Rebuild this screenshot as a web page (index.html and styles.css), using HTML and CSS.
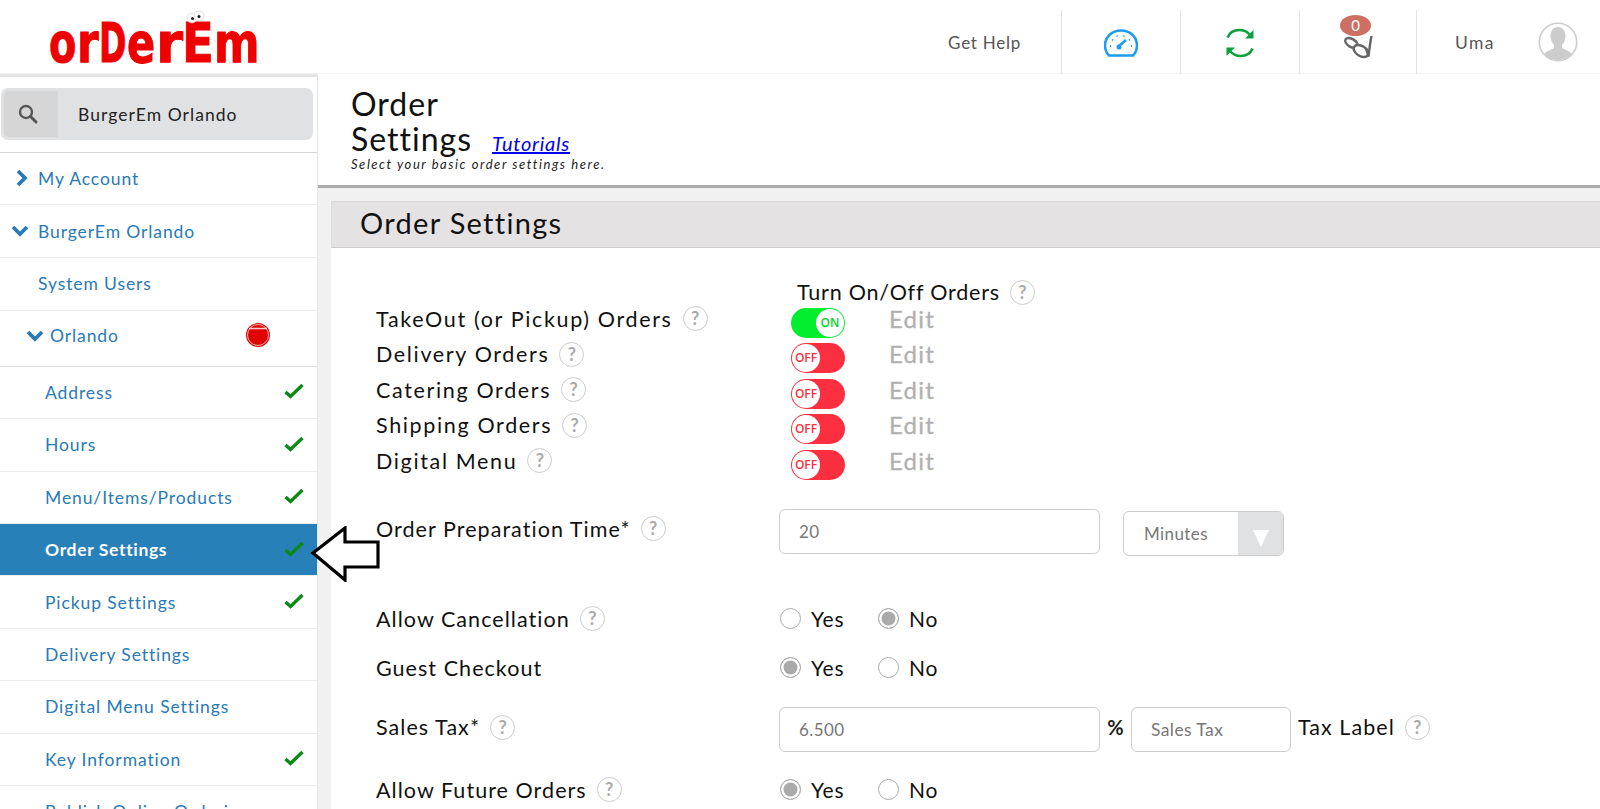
FILE: index.html
```html
<!DOCTYPE html>
<html lang="en">
<head>
<meta charset="utf-8">
<title>Order Settings</title>
<link rel="stylesheet" href="styles.css">
</head>
<body>
<header class="topbar">
  <div class="logo">
    <div class="logo-text"><span class="lg lg-o">o</span><span class="lg lg-r">r</span><span class="lg lg-d">D</span><span class="lg lg-e">e</span><span class="lg lg-r2">r</span><span class="lg lg-ce">E</span><span class="lg lg-m">m</span></div>
    <svg class="logo-eyes" viewBox="0 0 18 14" width="18" height="14"><circle cx="5" cy="8" r="5" fill="#fff" stroke="#ccc" stroke-width=".6"/><circle cx="12" cy="6" r="5" fill="#fff" stroke="#ccc" stroke-width=".6"/><circle cx="5.500" cy="8.500" r="1.500" fill="#222"/><circle cx="12" cy="6.500" r="1.500" fill="#222"/></svg>
  </div>
  <div class="top-cell help">Get Help</div>
  <div class="top-cell icon-cell">
    <svg width="34" height="28" viewBox="0 0 34 28" fill="none"><path d="M5 26.500h24c3-3 4-6.500 4-10C33 8 26 1.500 17 1.500S1 8 1 16.500c0 3.500 1 7 4 10z" stroke="#1e9cf0" stroke-width="2.600" stroke-linejoin="round"/><path d="M15 17l7-6" stroke="#1e9cf0" stroke-width="2.600"/><circle cx="15" cy="18" r="2.500" fill="#1e9cf0"/><path d="M6 17h1M8 10.500l1 .6M13 6.500l.4 1M20 6.500l-.4 1M28 17h-1M26 10.500l-1 .6" stroke="#1e9cf0" stroke-width="2"/></svg>
  </div>
  <div class="top-cell icon-cell">
    <svg width="30" height="32" viewBox="0 0 30 32" fill="none"><path d="M2.500 10.500C4.500 5.500 9 3 14.500 3c4 0 7.500 1.500 10 4.500" stroke="#0da03c" stroke-width="2.600"/><path d="M28.500 3v8.500H20z" fill="#0da03c"/><path d="M27.500 21.500c-2 5-6.500 7.500-12 7.500-4 0-7.500-1.500-10-4.500" stroke="#0da03c" stroke-width="2.600"/><path d="M1.500 29v-8.500H10z" fill="#0da03c"/></svg>
  </div>
  <div class="top-cell icon-cell pills">
    <span class="badge">0</span>
    <svg class="pill-icon" width="30" height="25" viewBox="0 0 30 25" fill="none"><ellipse cx="8.500" cy="8" rx="7" ry="4" transform="rotate(32 8.500 8)" stroke="#666" stroke-width="2.400" fill="#fff"/><ellipse cx="18" cy="16" rx="8" ry="5" transform="rotate(32 18 16)" stroke="#666" stroke-width="2.400" fill="#fff"/><path d="M23 13l2.500 8.500C26.500 14 27 8 28.500 1" stroke="#666" stroke-width="2.400"/></svg>
  </div>
  <div class="top-user">
    <span class="user-name">Uma</span>
    <svg class="avatar" width="40" height="40" viewBox="0 0 40 40"><circle cx="20" cy="20" r="18.700" fill="#fff" stroke="#ccc" stroke-width="1.600"/><path d="M20 5c5 0 7.500 4 7.500 9 0 3.500-1.500 7-3.500 9v3c3 2 8 3 10 6-3.500 3.800-8.500 6-14 6s-10.500-2.200-14-6c2-3 7-4 10-6v-3c-2-2-3.500-5.500-3.500-9 0-5 2.500-9 7.500-9z" fill="#ccc"/></svg>
  </div>
</header>

<div class="layout">
  <aside class="sidebar">
    <div class="search-wrap">
      <div class="search">
        <span class="search-icon"><svg width="22" height="22" viewBox="0 0 22 22" fill="none"><circle cx="9" cy="9" r="6" stroke="#555" stroke-width="2.400"/><path d="M13.500 13.500L19 19" stroke="#555" stroke-width="3" stroke-linecap="round"/></svg></span>
        <span class="search-text">BurgerEm Orlando</span>
      </div>
    </div>
    <nav class="nav">
      <a class="nav-row lvl0"><svg class="chev" width="14" height="18" viewBox="0 0 14 18"><path d="M3 2l7 7-7 7" fill="none" stroke="#2a7ab5" stroke-width="3.800"/></svg>My Account</a>
      <a class="nav-row lvl0"><svg class="chev down" width="18" height="14" viewBox="0 0 18 14"><path d="M2 3l7 7 7-7" fill="none" stroke="#2a7ab5" stroke-width="3.800"/></svg>BurgerEm Orlando</a>
      <a class="nav-row lvl1">System Users</a>
      <a class="nav-row lvl2"><svg class="chev down" width="18" height="14" viewBox="0 0 18 14"><path d="M2 3l7 7 7-7" fill="none" stroke="#2a7ab5" stroke-width="3.800"/></svg>Orlando
        <svg class="status" width="26" height="26" viewBox="0 0 26 26"><circle cx="13" cy="13" r="12" fill="#e00000"/><circle cx="13" cy="13" r="10.500" fill="none" stroke="#f6b9b9" stroke-width="1"/><path d="M4 6.500h18" stroke="#fff" stroke-width="1.500" opacity=".8"/></svg>
      </a>
      <a class="nav-row sub">Address<svg class="check" width="20" height="16" viewBox="0 0 20 16"><path d="M1.500 9l5 4.500L18.500 2" fill="none" stroke="#0d8a16" stroke-width="3.400"/></svg></a>
      <a class="nav-row sub">Hours<svg class="check" width="20" height="16" viewBox="0 0 20 16"><path d="M1.500 9l5 4.500L18.500 2" fill="none" stroke="#0d8a16" stroke-width="3.400"/></svg></a>
      <a class="nav-row sub">Menu/Items/Products<svg class="check" width="20" height="16" viewBox="0 0 20 16"><path d="M1.500 9l5 4.500L18.500 2" fill="none" stroke="#0d8a16" stroke-width="3.400"/></svg></a>
      <a class="nav-row sub active">Order Settings<svg class="check" width="20" height="16" viewBox="0 0 20 16"><path d="M1.500 9l5 4.500L18.500 2" fill="none" stroke="#0d8a16" stroke-width="3.400"/></svg></a>
      <a class="nav-row sub">Pickup Settings<svg class="check" width="20" height="16" viewBox="0 0 20 16"><path d="M1.500 9l5 4.500L18.500 2" fill="none" stroke="#0d8a16" stroke-width="3.400"/></svg></a>
      <a class="nav-row sub">Delivery Settings</a>
      <a class="nav-row sub">Digital Menu Settings</a>
      <a class="nav-row sub">Key Information<svg class="check" width="20" height="16" viewBox="0 0 20 16"><path d="M1.500 9l5 4.500L18.500 2" fill="none" stroke="#0d8a16" stroke-width="3.400"/></svg></a>
      <a class="nav-row sub">Publish Online Ordering</a>
    </nav>
  </aside>

  <main class="main">
    <div class="page-head">
      <h1 class="page-title">Order<br>Settings<a class="tutorials">Tutorials</a></h1>
      <p class="page-sub">Select your basic order settings here.</p>
    </div>
    <section class="panel">
      <h2 class="panel-title">Order Settings</h2>
      <div class="panel-body">
        <div class="row turn-row"><span></span><span class="label turn-label">Turn On/Off Orders<i class="q">?</i></span></div>
        <div class="row tog-row"><span class="label">TakeOut (or Pickup) Orders<i class="q">?</i></span><span class="tog-cell"><span class="toggle on"><b>ON</b></span><span class="edit">Edit</span></span></div>
        <div class="row tog-row"><span class="label">Delivery Orders<i class="q">?</i></span><span class="tog-cell"><span class="toggle off"><b>OFF</b></span><span class="edit">Edit</span></span></div>
        <div class="row tog-row"><span class="label">Catering Orders<i class="q">?</i></span><span class="tog-cell"><span class="toggle off"><b>OFF</b></span><span class="edit">Edit</span></span></div>
        <div class="row tog-row"><span class="label">Shipping Orders<i class="q">?</i></span><span class="tog-cell"><span class="toggle off"><b>OFF</b></span><span class="edit">Edit</span></span></div>
        <div class="row tog-row"><span class="label">Digital Menu<i class="q">?</i></span><span class="tog-cell"><span class="toggle off"><b>OFF</b></span><span class="edit">Edit</span></span></div>

        <div class="row prep-row"><span class="label">Order Preparation Time*<i class="q">?</i></span>
          <span class="ctl"><input class="field wide" value="20"><span class="select"><span class="select-val">Minutes</span><span class="select-arrow"></span></span></span></div>

        <div class="row radio-row cancel"><span class="label">Allow Cancellation<i class="q">?</i></span><span class="radios"><i class="radio"></i><span class="opt">Yes</span><i class="radio sel"></i><span class="opt">No</span></span></div>
        <div class="row radio-row guest"><span class="label">Guest Checkout</span><span class="radios"><i class="radio sel"></i><span class="opt">Yes</span><i class="radio"></i><span class="opt">No</span></span></div>

        <div class="row tax-row"><span class="label">Sales Tax*<i class="q">?</i></span>
          <span class="ctl"><input class="field wide" value="6.500"><span class="pct">%</span><input class="field short" value="Sales Tax"><span class="label tax-label">Tax Label<i class="q">?</i></span></span></div>

        <div class="row radio-row future"><span class="label">Allow Future Orders<i class="q">?</i></span><span class="radios"><i class="radio sel"></i><span class="opt">Yes</span><i class="radio"></i><span class="opt">No</span></span></div>
      </div>
    </section>
  </main>
</div>

<svg class="pointer" width="72" height="56" viewBox="0 0 72 56"><path d="M3 27L35 2v14h33v25H35v13z" fill="#fff" stroke="#000" stroke-width="3.200"/></svg>
</body>
</html>
```
FILE: styles.css
```css
* { box-sizing: border-box; }
html, body { margin: 0; height: 809px; overflow: hidden; background: #fff; }
body { position: relative; font-family: "Lato", "Open Sans", sans-serif; color: #111; }

.topbar { display: flex; height: 74px; background: #fff; border-bottom: 1px solid #f2f2f2; }
.logo { position: relative; width: 932px; padding: 15px 0 0 49px; }
.logo-text { display: flex; font-family: "DejaVu Sans", sans-serif; font-weight: 700; font-size: 56px; line-height: 56px; color: #ee0000; -webkit-text-stroke: 1px #ee0000; }
.lg { display: block; flex: none; transform-origin: 0 100%; }
.lg-o { width: 28px; transform: scaleX(.71); }
.lg-r { width: 22px; transform: scaleX(.78); }
.lg-d { width: 28px; transform: scaleX(.59); }
.lg-e { width: 29px; transform: scaleX(.74); }
.lg-r2 { width: 26px; transform: scaleX(.98); }
.lg-ce { width: 32px; transform: scaleX(.83); }
.lg-m { width: 45px; transform: scaleX(.78); }
.logo-eyes { position: absolute; left: 187px; top: 10px; }
.top-cell { display: flex; align-items: center; justify-content: center; height: 64px; margin-top: 10px; border-right: 1px solid #e2e2e2; }
.help { width: 130px; justify-content: flex-end; padding-right: 40px; font-size: 17px; color: #555; letter-spacing: .75px; }
.icon-cell { width: 119px; padding-top: 2px; }
.pills { position: relative; width: 117px; }
.badge { position: absolute; left: 40px; top: 5px; width: 31px; height: 21px; border-radius: 50%; background: #cd6f63; color: #fff; font-size: 15px; line-height: 21px; text-align: center; }
.pill-icon { margin-top: 8px; }
.top-user { display: flex; align-items: center; height: 64px; margin-top: 10px; padding-left: 38px; }
.user-name { width: 83px; font-size: 17.500px; color: #555; letter-spacing: 1.400px; }

.layout { display: flex; height: 735px; }
.sidebar { width: 318px; flex: none; border-top: 3px solid #e4e4e4; border-right: 1px solid #e6e6e6; background: #fff; overflow: hidden; }
.search-wrap { height: 76px; padding: 11px 4px 0 1px; border-bottom: 1px solid #d6d6d6; }
.search { display: flex; align-items: center; height: 52px; border-radius: 7px; background: #e0e1e3; padding: 3px 0 3px 3px; }
.search-icon { display: flex; align-items: center; justify-content: center; width: 54px; height: 46px; padding-right: 6px; border-radius: 5px 0 0 5px; background: #d6d6d6; }
.search-text { margin-left: 20px; font-size: 17.500px; color: #222; letter-spacing: 1.050px; }

.nav { display: flex; flex-direction: column; }
.nav-row { position: relative; display: flex; align-items: center; height: 52.400px; flex: none; font-size: 17.500px; color: #2a7ab5; letter-spacing: .9px; border-bottom: 1px solid #ececec; }
.lvl0 { padding-left: 38px; }
.lvl1 { padding-left: 38px; height: 53px; }
.lvl2 { padding: 0 0 5px 50px; height: 56px; border-bottom-color: #ddd; }
.sub { padding-left: 45px; }
.chev { position: absolute; left: 15px; top: 50%; margin-top: -10px; }
.chev.down { left: 11px; margin-top: -7px; }
.lvl2 .chev.down { left: 26px; margin-top: -9px; }
.status { position: absolute; left: 245px; top: 50%; margin-top: -16px; }
.check { position: absolute; left: 284px; top: 50%; margin-top: -9px; }
.active { background: #2880b9; color: #fff; font-weight: 700; letter-spacing: .65px; }

.main { flex: 1; min-width: 0; background: #f1f1f1; }
.page-head { height: 114px; padding: 12px 0 0 33px; background: #fff; border-bottom: 3px solid #aaa; }
.page-title { margin: 0; font-weight: 400; font-size: 32px; line-height: 35px; letter-spacing: 1px; color: #111; }
.tutorials { margin-left: 20px; font-size: 20px; font-style: italic; color: #0000ee; text-decoration: underline; letter-spacing: .75px; }
.page-sub { margin: -4px 0 0; font-size: 13px; line-height: 14px; font-style: italic; letter-spacing: 1.550px; color: #222; }

.panel { margin: 13px 0 0 13px; height: 620px; background: #fff; }
.panel-title { margin: 0; height: 47px; padding-left: 28px; font-weight: 400; font-size: 29px; line-height: 42px; letter-spacing: 1.300px; background: #e4e2e3; border-top: 1px solid #d8d8d8; border-bottom: 1px solid #ccc; border-left: 1px solid #ddd; }
.panel-body { padding: 34px 0 0 45px; }

.row { display: grid; grid-template-columns: 403px 1fr; align-items: center; }
.label { display: inline-flex; align-items: center; font-size: 21.500px; letter-spacing: 1.050px; color: #111; white-space: nowrap; }
.q { display: inline-block; flex: none; width: 25px; height: 25px; margin-left: 10px; border: 1.500px solid #ccc; border-radius: 50%; font-style: normal; font-weight: 700; font-size: 18px; line-height: 22px; text-align: center; color: #aaa; letter-spacing: 0; }
.turn-row { height: 23px; margin-top: -3px; margin-bottom: 3px; }
.turn-label { margin-left: 18px; letter-spacing: .8px; }
.tog-row { height: 35.500px; }
.tog-row > .label { margin-top: -8px; letter-spacing: 1.650px; }
.tog-cell { display: flex; align-items: center; padding-left: 12px; }
.toggle { position: relative; display: block; width: 54px; height: 30px; border-radius: 15px; }
.toggle b { position: absolute; top: 1px; width: 28px; height: 28px; border-radius: 50%; background: #fff; font-family: "Open Sans", sans-serif; font-weight: 600; font-size: 12px; line-height: 28px; text-align: center; letter-spacing: 0; }
.toggle.on { background: #00ee2e; }
.toggle.on b { right: 1px; color: #00d42a; }
.toggle.off { background: #fb2f40; }
.toggle.off b { left: 1px; color: #fb2f40; }
.edit { margin-left: 44px; margin-top: -9px; font-size: 24px; letter-spacing: 1.200px; color: #b0b0b0; -webkit-text-stroke: .3px #b0b0b0; }

.ctl { display: flex; align-items: center; }
.field { height: 45px; border: 1px solid #ccc; border-radius: 6px; background: #fff; padding: 0 0 0 19px; font: 17px "Lato", sans-serif; color: #777; letter-spacing: .4px; outline: none; }
.wide { width: 321px; }
.short { width: 160px; font-size: 17.500px; }
.prep-row { margin-top: 25px; height: 45px; }
.prep-row > .label { margin-top: -6px; }
.select { display: flex; width: 161px; height: 45px; margin: 3px 0 0 23px; border: 1px solid #ccc; border-radius: 6px; overflow: hidden; }
.select-val { flex: 1; padding-left: 20px; font-size: 17px; line-height: 44px; color: #777; letter-spacing: .4px; }
.select-arrow { position: relative; width: 45px; background: #e0e1e3; }
.select-arrow::after { content: ""; position: absolute; left: 15px; top: 18px; border-left: 8px solid transparent; border-right: 8px solid transparent; border-top: 17px solid #fff; }

.radio-row { height: 30px; }
.cancel { margin-top: 51px; }
.guest { margin-top: 19px; }
.future { margin-top: 23px; }
.tax-row { margin-top: 24px; height: 45px; }
.tax-row > .label { margin-top: -4px; }
.radios { display: flex; align-items: center; padding-left: 1px; }
.radio { display: block; width: 21px; height: 21px; border: 1.500px solid #aaa; border-radius: 50%; background: #fff; }
.radio.sel { background: #aaa; box-shadow: inset 0 0 0 2.500px #fff; }
.opt { width: 67px; margin-left: 10px; font-size: 21px; letter-spacing: .8px; color: #111; }
.pct { width: 31px; font-size: 20px; text-align: center; font-weight: 700; color: #222; margin-top: -4px; }
.tax-label { margin: -4px 0 0 7px; }
.pointer { position: absolute; left: 310px; top: 526px; }
```
